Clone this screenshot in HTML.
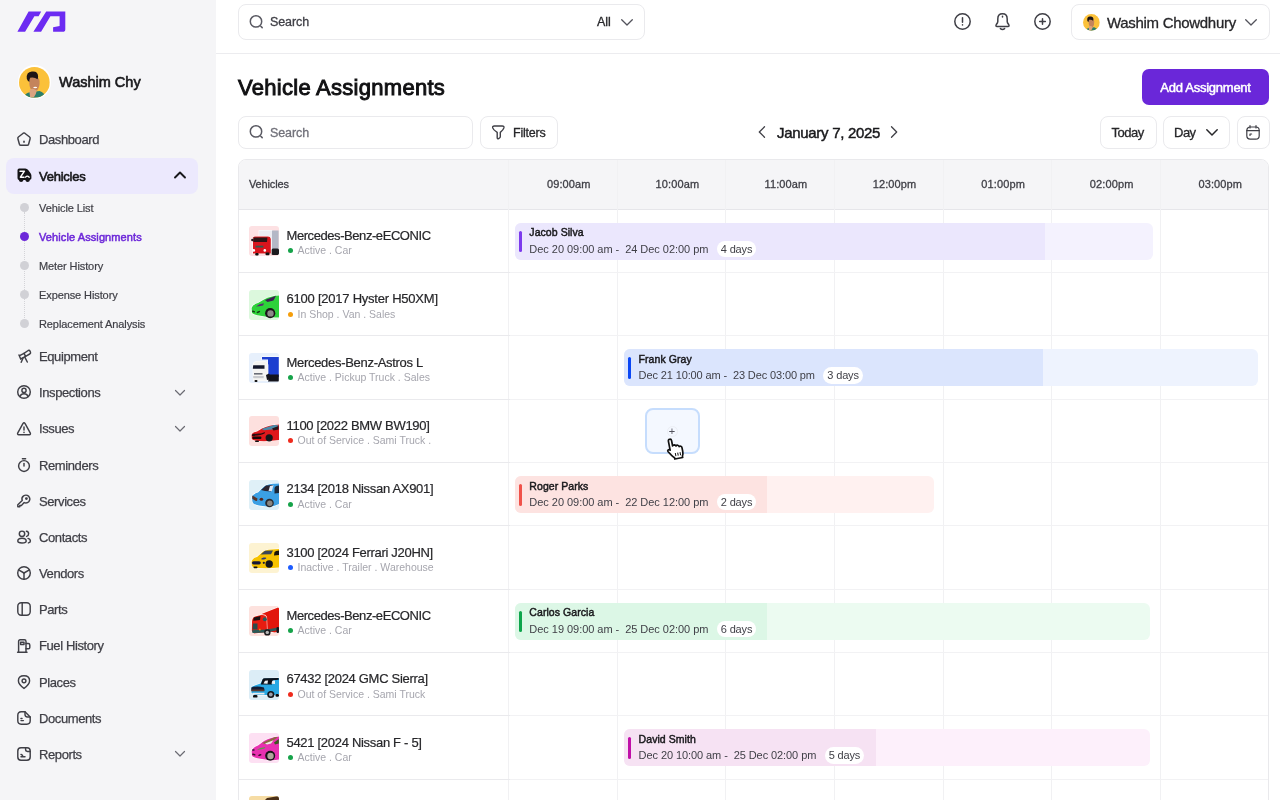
<!DOCTYPE html>
<html lang="en">
<head>
<meta charset="utf-8">
<title>Vehicle Assignments</title>
<style>
*{box-sizing:border-box;margin:0;padding:0}
html,body{width:1280px;height:800px;overflow:hidden;background:#fff}
html{will-change:transform}
body{font-family:"Liberation Sans",sans-serif;color:#1f1f23;position:relative;-webkit-font-smoothing:antialiased}
.abs{position:absolute}
svg{display:block;overflow:visible}
/* sidebar */
#side{position:absolute;left:0;top:0;width:216px;height:800px;background:#f5f5f7}
.nav{-webkit-text-stroke:0.25px #3f3f46;position:absolute;left:6px;width:192px;height:36px;border-radius:8px;font-size:13px;color:#3f3f46;line-height:36px;padding-left:33px;letter-spacing:-0.4px}
.nav svg.ic{position:absolute;left:11px;top:10.3px;width:14px;height:14px;stroke:#3f3f46;fill:none;stroke-width:1.45;stroke-linecap:round;stroke-linejoin:round}
.nav svg.ch{position:absolute;left:169px;top:14.6px;width:10px;height:6px;stroke:#6b6b73;fill:none;stroke-width:1.2;stroke-linecap:round;stroke-linejoin:round}
.nav.act{background:#ece9fd;color:#18181b;-webkit-text-stroke:0.6px #18181b;letter-spacing:-0.25px}
.sub{-webkit-text-stroke:0.2px #3f3f46;position:absolute;left:39px;font-size:11px;color:#3f3f46;line-height:14px;letter-spacing:-0.1px}
.sub.on{color:#6d28d9;-webkit-text-stroke:0.5px #6d28d9;letter-spacing:0.1px}
.dot{position:absolute;left:20px;width:9px;height:9px;border-radius:50%;background:#d1d1d6}
.dot.on{background:#6d28d9}
/* top */
#top{position:absolute;left:216px;top:0;width:1064px;height:54px;border-bottom:1px solid #ececef;background:#fff}
.box{position:absolute;border:1.3px solid #eaeaed;border-radius:8px;background:#fff}
.t13{font-size:13px;color:#3f3f46;-webkit-text-stroke:0.3px currentColor}
/* table */
#tbl{position:absolute;left:237.5px;top:159px;width:1031.5px;height:660px;border:1px solid #e9e9ec;border-radius:8px 8px 0 0;overflow:hidden;background:#fff}
#thead{position:absolute;left:0;top:0;width:1031px;height:49.5px;background:#f5f5f7;border-bottom:1px solid #e6e6ea}
.th{position:absolute;top:0;height:49px;line-height:48.5px;font-size:11px;color:#3f3f46;text-align:center;letter-spacing:0.12px;-webkit-text-stroke:0.3px #3f3f46}
.vl{position:absolute;top:0;width:1px;height:660px;background:#f1f1f3}
.hl{position:absolute;left:0;width:1031px;height:1px;background:linear-gradient(90deg,#eaeaed 0,#eaeaed 271px,#f2f2f4 271px)}
.veh{position:absolute;left:0;width:270px;height:63px}
.veh .thumb{position:absolute;left:10.5px;top:17.2px;width:30px;height:30px;border-radius:3px;overflow:hidden}
.veh .nm{-webkit-text-stroke:0.2px #27272a;position:absolute;left:48px;top:18.7px;font-size:13px;line-height:16px;color:#27272a;white-space:nowrap;letter-spacing:-0.3px}
.veh .st{position:absolute;left:59px;top:35px;font-size:10.5px;line-height:12px;color:#a6a6ae;white-space:nowrap}
.veh .sd{position:absolute;left:49px;top:39px;width:5px;height:5px;border-radius:50%}
.thumb .b{stroke:#fff;stroke-width:1.1;paint-order:stroke;stroke-linejoin:round}
.bar{position:absolute;height:37.2px;border-radius:6px;overflow:hidden}
.bar .dk{position:absolute;left:0;top:0;height:38px}
.bar .ac{position:absolute;left:3.75px;top:8px;width:3.4px;height:21.6px;border-radius:2px}
.bar .bn{position:absolute;left:14.6px;top:3.6px;font-size:10.5px;-webkit-text-stroke:0.45px #18181b;line-height:13px;color:#18181b;white-space:nowrap;letter-spacing:0.06px}
.bar .bd{position:absolute;left:14.6px;top:20px;font-size:11px;line-height:13px;color:#3f3f46;white-space:nowrap;letter-spacing:-0.04px}
.bar .pill{display:inline-block;vertical-align:top;margin:-2px 0 0 8.5px;height:16.5px;line-height:16.5px;border-radius:9px;background:#fff;font-size:11px;color:#3f3f46;padding:0 3.9px;white-space:nowrap;letter-spacing:-0.15px}
</style>
</head>
<body>
<div id="side">
  <svg class="abs" style="left:0;top:0" width="80" height="40" viewBox="0 0 80 40"><path fill="#6c2bf2" d="M28.6 11.4H41.2L38.6 16.2H34.4L25.1 31.8H17.4Z"/><path fill="#6c2bf2" d="M46.2 11.4H65.3V29.2Q65.3 31.8 62.6 31.8H53.1V27.2L59.6 25.9V16.2H50.4L41.1 31.8H33.4Z"/></svg>
  <div class="abs" style="left:17.600px;top:65.300px;width:33.600px;height:33.600px;border-radius:50%;background:#fff"></div>
  <svg class="abs" style="left:19px;top:66.700px" width="30.800" height="30.800" viewBox="0 0 30 30"><defs><clipPath id="av"><circle cx="15" cy="15" r="15"/></clipPath></defs><g clip-path="url(#av)"><rect width="30" height="30" fill="#fbc13a"/><path d="M4 30Q6 25 11 24.500L20 23.500Q25 25 26 30Z" fill="#2b7f6c"/><path d="M10 12Q9.600 19 12 22.500Q14.500 25 17.500 23Q20.500 19.500 20 13.500Q19.500 9.500 15 9.500Q10.500 9.500 10 12Z" fill="#c4845c"/><path d="M7.600 11.500Q6.800 5 12.500 4.500Q18.500 3.800 18.600 9Q18.700 11 18 12Q15 9.400 11 10.400Q10 12 10 14.500Q8 13.600 7.600 11.500Z" fill="#1d1516"/><ellipse cx="15.800" cy="20" rx="1.900" ry="0.800" fill="#fff"/><path d="M10.400 22.500Q12 20.800 14.500 21.500L17.300 23Q17 26 14.500 29.500L10.800 29.500Q10 25.500 10.400 22.500Z" fill="#dba380"/></g></svg>
  <div class="abs" style="left:59px;top:73px;font-size:14.500px;-webkit-text-stroke:0.600px #18181b;line-height:18px;color:#18181b;letter-spacing:0px" id="wname">Washim Chy</div>

  <div class="nav" style="top:121.8px"><svg class="ic" viewBox="0 0 14 14"><path d="M6.200 1.200Q7 0.600 7.800 1.200L12.600 5Q13.400 5.700 13.100 6.700L11.600 12.200Q11.300 13.200 10.200 13.200H3.800Q2.700 13.200 2.400 12.200L0.900 6.700Q0.600 5.700 1.400 5Z"/><path d="M7 9.200V10.200"/></svg>Dashboard</div>
  <div class="nav act" style="top:157.5px;line-height:37.6px"><svg class="abs" style="left:11px;top:10.500px" width="15" height="15" viewBox="0 0 15 15"><path d="M2.200 0.600H8.200Q10.200 0.600 11.400 2.200L13.600 5.200Q14.400 6.300 14.400 7.600V10.200Q14.400 11.600 13 11.800Q12.600 14 10.600 14Q8.800 14 8.300 12H6.500Q6 14 4.100 14Q2.200 14 1.800 11.900Q0.500 11.600 0.500 10V2.300Q0.500 0.600 2.200 0.600Z" fill="#141416"/><path d="M3 3.200H7.400L3.400 9.200H7" fill="none" stroke="#fff" stroke-width="1.500" stroke-linejoin="round" stroke-linecap="round"/><path d="M8.600 9.200Q10.200 7 12.200 9.200" fill="none" stroke="#fff" stroke-width="1.300" stroke-linecap="round"/></svg>Vehicles<svg class="abs" style="left:168px;top:13.500px" width="12" height="8" viewBox="0 0 12 8"><path d="M1 6.500L6 1.500L11 6.500" fill="none" stroke="#18181b" stroke-width="1.900" stroke-linecap="round" stroke-linejoin="round"/></svg></div>

  <div class="abs" style="left:24px;top:212px;width:0;height:108px;border-left:1px dotted #d4d4d8"></div>
  <div class="dot" style="top:203px"></div><div class="sub" style="top:201px">Vehicle List</div>
  <div class="dot on" style="top:232px"></div><div class="sub on" style="top:230px">Vehicle Assignments</div>
  <div class="dot" style="top:261px"></div><div class="sub" style="top:259px">Meter History</div>
  <div class="dot" style="top:290px"></div><div class="sub" style="top:288px">Expense History</div>
  <div class="dot" style="top:319px"></div><div class="sub" style="top:317px">Replacement Analysis</div>

  <div class="nav" style="top:339px"><svg class="ic" viewBox="0 0 14 14"><path d="M7 4.300L11.200 1.500Q12.400 0.900 13 2.100L13.500 3.200Q13.900 4.400 12.700 5L8.600 7.300Z"/><path d="M7 4.300L2.600 6.700"/><path d="M8.600 7.300L4.200 9.600"/><path d="M2 6L3.800 10.200"/><path d="M6.200 8.800L4.200 13.300"/><path d="M7.800 8.200L10.300 13"/></svg>Equipment</div>
  <div class="nav" style="top:375.2px"><svg class="ic" viewBox="0 0 14 14"><circle cx="7" cy="7" r="6.300"/><circle cx="7" cy="5.400" r="2.100"/><path d="M3 11.600Q4 8.800 7 8.800Q10 8.800 11 11.600"/></svg>Inspections<svg class="ch" viewBox="0 0 10 6"><path d="M0.500 0.500L5 5L9.500 0.500"/></svg></div>
  <div class="nav" style="top:411.4px"><svg class="ic" viewBox="0 0 14 14"><path d="M5.900 1.600Q7 0 8.100 1.600L13.200 10.800Q14 12.600 12.200 12.800H1.800Q0 12.600 0.800 10.800Z"/><path d="M7 5V8"/><path d="M7 10.200V10.400"/></svg>Issues<svg class="ch" viewBox="0 0 10 6"><path d="M0.500 0.500L5 5L9.500 0.500"/></svg></div>
  <div class="nav" style="top:447.5px"><svg class="ic" viewBox="0 0 14 14"><circle cx="7" cy="8" r="5.400"/><path d="M5.400 0.800H8.600"/><path d="M7 5.400V8"/></svg>Reminders</div>
  <div class="nav" style="top:483.7px"><svg class="ic" viewBox="0 0 14 14"><path d="M5.200 6.600Q4.200 3.400 6.600 1.800Q9.400 0.200 11.800 2.400Q13.800 4.800 12 7.400Q10 9.600 7.200 8.600L4.400 11.400H2.800V12.800H0.800V10.800Z"/><circle cx="9.400" cy="4.600" r="0.700"/></svg>Services</div>
  <div class="nav" style="top:519.9px"><svg class="ic" viewBox="0 0 14 14"><circle cx="5" cy="3.800" r="2.700"/><path d="M0.800 11Q0.800 8.200 5 8.200Q9.200 8.200 9.200 11Q9.200 13 5 13Q0.800 13 0.800 11Z"/><path d="M9.400 1.200Q11.600 1.400 11.600 3.800Q11.600 6 9.600 6.400"/><path d="M11 8.400Q13.400 9 13.400 11Q13.400 12.600 11.400 12.900"/></svg>Contacts</div>
  <div class="nav" style="top:556.1px"><svg class="ic" viewBox="0 0 14 14"><circle cx="7" cy="7" r="6.300"/><path d="M7 7V13.200"/><path d="M7 7L1.600 3.900"/><path d="M7 7L12.400 3.900"/></svg>Vendors</div>
  <div class="nav" style="top:592.2px"><svg class="ic" viewBox="0 0 14 14"><rect x="0.800" y="0.800" width="12.400" height="12.400" rx="3.400"/><path d="M5.200 0.800V13.200"/></svg>Parts</div>
  <div class="nav" style="top:628.4px"><svg class="ic" viewBox="0 0 14 14"><path d="M1.600 13V2.400Q1.600 0.800 3.200 0.800H7.400Q9 0.800 9 2.400V13"/><path d="M0.600 13.200H10"/><path d="M3.600 3.200H7V5.400H3.600Z"/><path d="M9 4.400H11.200Q12.800 4.400 12.800 6V8.400Q12.800 9.800 11.400 9.800H9"/></svg>Fuel History</div>
  <div class="nav" style="top:664.6px"><svg class="ic" viewBox="0 0 14 14"><path d="M7 13.400Q1.400 9.400 1.400 5.800Q1.400 0.700 7 0.700Q12.600 0.700 12.600 5.800Q12.600 9.400 7 13.400Z"/><circle cx="7" cy="5.800" r="1.900"/></svg>Places</div>
  <div class="nav" style="top:700.8px"><svg class="ic" viewBox="0 0 14 14"><path d="M4.200 0.800H8L13.200 6V9.800Q13.200 13.200 9.800 13.200H4.200Q0.800 13.200 0.800 9.800V4.200Q0.800 0.800 4.200 0.800Z"/><path d="M8 0.800V3.600Q8 6 10.400 6H13.200"/><path d="M4 9.600H6.400"/><path d="M4 7.400H5"/></svg>Documents</div>
  <div class="nav" style="top:736.9px"><svg class="ic" viewBox="0 0 14 14"><rect x="0.800" y="0.800" width="12.400" height="12.400" rx="3.200"/><path d="M8.600 0.800V2.600Q8.600 4.400 10.400 4.400H13.200"/><path d="M4 9.800H8"/><path d="M4 7.400L5.600 8.400"/></svg>Reports<svg class="ch" viewBox="0 0 10 6"><path d="M0.500 0.500L5 5L9.500 0.500"/></svg></div>
</div>
<div id="top">
  <div class="box" style="left:22px;top:4px;width:407px;height:36px"></div>
  <svg class="abs" style="left:33px;top:14px" width="16" height="16" viewBox="0 0 16 16" fill="none" stroke="#5a5a63" stroke-width="1.500" stroke-linecap="round"><circle cx="7" cy="7.400" r="5.700"/><path d="M11.800 12.200L13.200 13.600"/></svg>
  <div class="abs t13" style="left:54px;top:14px;line-height:16px;font-size:12.500px;letter-spacing:-0.100px">Search</div>
  <div class="abs t13" style="left:381px;top:14px;line-height:16px;font-size:12.500px;color:#27272a">All</div>
  <svg class="abs" style="left:405px;top:18.500px" width="12" height="7" viewBox="0 0 12 7" fill="none" stroke="#52525b" stroke-width="1.300" stroke-linecap="round" stroke-linejoin="round"><path d="M0.700 0.700L6 6L11.300 0.700"/></svg>

  <svg class="abs" style="left:737.500px;top:13.300px" width="17" height="17" viewBox="0 0 17 17" fill="none" stroke="#3f3f46" stroke-width="1.500" stroke-linecap="round"><circle cx="8.500" cy="8.500" r="7.700"/><path d="M8.500 4.800V9.200"/><path d="M8.500 11.800V12"/></svg>
  <svg class="abs" style="left:778px;top:12.500px" width="17" height="18" viewBox="0 0 17 18" fill="none" stroke="#3f3f46" stroke-width="1.500" stroke-linecap="round" stroke-linejoin="round"><path d="M8.500 0.800Q13.200 0.800 13.200 6V8.600Q13.200 10 14.600 11.400Q15.800 13.400 13.800 13.600H3.200Q1.200 13.400 2.400 11.400Q3.800 10 3.800 8.600V6Q3.800 0.800 8.500 0.800Z"/><path d="M6.400 15.600Q8.500 17.400 10.600 15.600"/><path d="M8.500 3.200V4"/></svg>
  <svg class="abs" style="left:817.500px;top:13.300px" width="17" height="17" viewBox="0 0 17 17" fill="none" stroke="#3f3f46" stroke-width="1.500" stroke-linecap="round"><circle cx="8.500" cy="8.500" r="7.700"/><path d="M8.500 5.700V11.300"/><path d="M5.700 8.500H11.300"/></svg>

  <div class="box" style="left:855px;top:4px;width:199px;height:36px"></div>
  <svg class="abs" style="left:866.700px;top:13.500px" width="16.800" height="16.800" viewBox="0 0 30 30"><defs><clipPath id="av2"><circle cx="15" cy="15" r="15"/></clipPath></defs><g clip-path="url(#av2)"><rect width="30" height="30" fill="#fbc13a"/><path d="M4 30Q6 25 11 24.500L20 23.500Q25 25 26 30Z" fill="#2b7f6c"/><path d="M10 12Q9.600 19 12 22.500Q14.500 25 17.500 23Q20.500 19.500 20 13.500Q19.500 9.500 15 9.500Q10.500 9.500 10 12Z" fill="#c4845c"/><path d="M7.600 11.500Q6.800 5 12.500 4.500Q18.500 3.800 18.600 9Q18.700 11 18 12Q15 9.400 11 10.400Q10 12 10 14.500Q8 13.600 7.600 11.500Z" fill="#1d1516"/><path d="M10.400 22.500Q12 20.800 14.500 21.500L17.300 23Q17 26 14.500 29.500L10.800 29.500Q10 25.500 10.400 22.500Z" fill="#dba380"/></g></svg>
  <div class="abs" style="left:891px;top:13.700px;font-size:15px;line-height:18px;color:#27272a;letter-spacing:-0.300px;-webkit-text-stroke:0.300px #27272a;white-space:nowrap" id="uname">Washim Chowdhury</div>
  <svg class="abs" style="left:1029px;top:18.500px" width="12" height="7" viewBox="0 0 12 7" fill="none" stroke="#52525b" stroke-width="1.300" stroke-linecap="round" stroke-linejoin="round"><path d="M0.700 0.700L6 6L11.300 0.700"/></svg>
</div>
<div class="abs" id="title" style="left:238px;top:75.3px;font-size:22px;font-weight:normal;-webkit-text-stroke:0.95px #111113;line-height:26px;color:#111113;letter-spacing:0.28px;white-space:nowrap">Vehicle Assignments</div>
<div class="abs" style="left:1142px;top:68.500px;width:127px;height:36px;border-radius:7px;background:#6a27d9;color:#fff;font-size:13px;-webkit-text-stroke:0.500px #fff;line-height:37.200px;text-align:center;letter-spacing:-0.25px" id="addbtn">Add Assignment</div>

<div class="box" style="left:238px;top:115.500px;width:235px;height:33px"></div>
<svg class="abs" style="left:249px;top:124px" width="16" height="16" viewBox="0 0 16 16" fill="none" stroke="#5a5a63" stroke-width="1.500" stroke-linecap="round"><circle cx="7" cy="7.400" r="5.700"/><path d="M11.800 12.200L13.200 13.600"/></svg>
<div class="abs t13" style="left:270px;top:124.500px;line-height:16px;font-size:12.500px;color:#71717a;letter-spacing:-0.100px">Search</div>
<div class="box" style="left:480px;top:115.500px;width:78px;height:33px"></div>
<svg class="abs" style="left:492px;top:124.600px" width="13" height="15" viewBox="0 0 13 15" fill="none" stroke="#3f3f46" stroke-width="1.400" stroke-linejoin="round" stroke-linecap="round"><path d="M2.300 1H10.300Q12.300 1 11.900 2.900Q11.300 5 8.300 7.400V11.600Q8.300 12.500 7.500 13L6.600 13.600Q5.300 14.200 5.200 12.800V7.400Q1.300 5 0.700 2.900Q0.300 1 2.300 1Z"/></svg>
<div class="abs t13" style="left:513px;top:124.500px;line-height:16px;font-size:12.500px;color:#27272a;letter-spacing:-0.200px">Filters</div>

<svg class="abs" style="left:758px;top:126px" width="8" height="12" viewBox="0 0 8 12" fill="none" stroke="#3f3f46" stroke-width="1.300" stroke-linecap="round" stroke-linejoin="round"><path d="M6.500 0.800L1.300 6L6.500 11.200"/></svg>
<div class="abs" id="date" style="left:777px;top:123.800px;font-size:15px;line-height:18px;color:#18181b;letter-spacing:-0.300px;white-space:nowrap;-webkit-text-stroke:0.450px #18181b">January 7, 2025</div>
<svg class="abs" style="left:890px;top:126px" width="8" height="12" viewBox="0 0 8 12" fill="none" stroke="#3f3f46" stroke-width="1.300" stroke-linecap="round" stroke-linejoin="round"><path d="M1.500 0.800L6.700 6L1.500 11.200"/></svg>

<div class="box" style="left:1100px;top:115.500px;width:56.500px;height:33px"></div>
<div class="abs t13" id="today" style="left:1111.500px;top:124.500px;line-height:16px;font-size:13px;color:#27272a;letter-spacing:-0.500px">Today</div>
<div class="box" style="left:1163px;top:115.500px;width:66.500px;height:33px"></div>
<div class="abs t13" style="left:1174px;top:124.500px;line-height:16px;font-size:13px;color:#27272a;letter-spacing:-0.500px">Day</div>
<svg class="abs" style="left:1205.500px;top:129px" width="12" height="7" viewBox="0 0 12 7" fill="none" stroke="#27272a" stroke-width="1.500" stroke-linecap="round" stroke-linejoin="round"><path d="M0.800 0.800L6 6L11.200 0.800"/></svg>
<div class="box" style="left:1236.500px;top:115.500px;width:33px;height:33px"></div>
<svg class="abs" style="left:1246px;top:125px" width="14" height="15" viewBox="0 0 14 15" fill="none" stroke="#3f3f46" stroke-width="1.200" stroke-linecap="round" stroke-linejoin="round"><rect x="0.800" y="2" width="12.400" height="12.200" rx="3.400"/><path d="M0.800 5.600H13.200"/><path d="M4 0.700V3"/><path d="M10 0.700V3"/><path d="M4 10.400V9H5.600"/></svg>

<div id="tbl">
<div id="thead">
<div class="th" style="left:10.5px;text-align:left;letter-spacing:-0.15px">Vehicles</div>
<div class="th" style="left:290.3px;width:80px">09:00am</div>
<div class="th" style="left:398.88px;width:80px">10:00am</div>
<div class="th" style="left:507.46px;width:80px">11:00am</div>
<div class="th" style="left:616.04px;width:80px">12:00pm</div>
<div class="th" style="left:724.62px;width:80px">01:00pm</div>
<div class="th" style="left:833.2px;width:80px">02:00pm</div>
<div class="th" style="left:941.78px;width:80px">03:00pm</div>
</div>
<div class="vl" style="left:269.8px"></div>
<div class="vl" style="left:378.38px"></div>
<div class="vl" style="left:486.96px"></div>
<div class="vl" style="left:595.54px"></div>
<div class="vl" style="left:704.12px"></div>
<div class="vl" style="left:812.7px"></div>
<div class="vl" style="left:921.28px"></div>
<div class="hl" style="top:112.03px"></div>
<div class="hl" style="top:175.36px"></div>
<div class="hl" style="top:238.69px"></div>
<div class="hl" style="top:302.02px"></div>
<div class="hl" style="top:365.35px"></div>
<div class="hl" style="top:428.68px"></div>
<div class="hl" style="top:492.01px"></div>
<div class="hl" style="top:555.34px"></div>
<div class="hl" style="top:618.67px"></div>
<div class="hl" style="top:682px"></div>
<div class="veh" style="top:49.2px"><svg class="thumb" viewBox="0 0 30 30"><rect width="30" height="30" fill="#fde1e3"/><rect x="10.2" y="4.5" width="13" height="19" fill="#ececf2" class="b"/><rect x="23" y="4.5" width="6.6" height="19" fill="#b4b8c6"/><rect x="22.5" y="22.5" width="7.5" height="6.5" rx="1.5" fill="#1c1c20"/><path d="M4.4 11.2Q4.600 10.600 6 10.600H19Q21.500 10.600 21.800 13V27.500H4V16Z" fill="#d8141c" class="b"/><path d="M4.600 11.400H18.400L18 16H4.400Z" fill="#2a1416"/><rect x="6.500" y="19.700" width="7.800" height="1.800" fill="#2c5a50"/><circle cx="4.800" cy="24.400" r="1.300" fill="#fff"/><circle cx="15.800" cy="24.400" r="1.300" fill="#fff"/><rect x="6.200" y="27" width="3.400" height="2.400" rx="1" fill="#111"/><rect x="16.500" y="26.500" width="4" height="2.800" rx="1" fill="#111"/><circle cx="3.400" cy="14" r="1.300" fill="#1c1c20"/></svg><div class="nm" style="letter-spacing:-0.43px">Mercedes-Benz-eECONIC</div><div class="sd" style="background:#16a34a"></div><div class="st">Active . Car</div></div>
<div class="veh" style="top:112.53px"><svg class="thumb" viewBox="0 0 30 30"><rect width="30" height="30" fill="#dcf8dd"/><path d="M2.600 18Q3.500 14.500 9 13L15 9.500Q22 5.800 30 5.500V27.500Q22 28 13 26Q5 25 3 23Z" fill="#2ed23a" class="b"/><path d="M16 10L27 5.800L24.500 10.500L18.500 12Z" fill="#3a2050"/><path d="M7 16.500Q10 13.500 15 13.200L14 15.500Q10 16.500 7 16.500Z" fill="#5a2a70"/><ellipse cx="4.500" cy="21.500" rx="1.600" ry="0.900" fill="#143a18" transform="rotate(15 4.5 21.5)"/><ellipse cx="9.400" cy="22" rx="1.900" ry="0.900" fill="#143a18" transform="rotate(-20 9.4 22)"/><circle cx="21.200" cy="23.200" r="5.100" fill="#1a1418"/><circle cx="21.500" cy="23.400" r="3.200" fill="#8c8a88"/></svg><div class="nm" style="letter-spacing:-0.23px">6100 [2017 Hyster H50XM]</div><div class="sd" style="background:#f59e0b"></div><div class="st">In Shop . Van . Sales</div></div>
<div class="veh" style="top:175.86px"><svg class="thumb" viewBox="0 0 30 30"><rect width="30" height="30" fill="#e7f0fc"/><path d="M13 4H29.800V24H19V6.500H13Z" fill="#1c3fd0" class="b"/><rect x="19" y="21.500" width="10.800" height="7" fill="#14141c"/><path d="M4 13Q4.200 9 8 8.600H15Q18.500 9 18.800 12V27.500H4.500Z" fill="#f4f4f2" class="b"/><path d="M4.200 12.200H15.500V15.800H3.800Z" fill="#14182c"/><rect x="5" y="20" width="8.500" height="1.600" fill="#6a6e78"/><rect x="4.200" y="23" width="10.500" height="2.200" fill="#c8cace"/><rect x="5.500" y="27" width="3" height="2" rx="1" fill="#111"/><path d="M17 22L20 20.500L22 26L18 27Z" fill="#14141c"/></svg><div class="nm">Mercedes-Benz-Astros L</div><div class="sd" style="background:#16a34a"></div><div class="st">Active . Pickup Truck . Sales</div></div>
<div class="veh" style="top:239.19px"><svg class="thumb" viewBox="0 0 30 30"><rect width="30" height="30" fill="#fde0de"/><path d="M2.500 19Q3 16.500 8 15.500L13 12.500Q20 9 30 8.500V24Q20 25.500 10 25Q4 24.500 2.800 23Z" fill="#e0181c" class="b"/><path d="M12.500 13L25 9L29.500 9.200L28 13L15 14.200Z" fill="#4a8aa8"/><path d="M23 12.500L29.500 10V13.500L24.500 14.500Z" fill="#281418"/><path d="M3 18.500Q8 17 12 17.500L16 16L15.500 17.500Q12 19.500 3 20Z" fill="#2a0c10"/><rect x="3.400" y="20.500" width="9" height="2.600" rx="1" fill="#1a0808"/><circle cx="20.200" cy="21.800" r="3.600" fill="#16161a"/><rect x="6" y="24.400" width="4" height="1.600" rx="0.800" fill="#111"/></svg><div class="nm">1100 [2022 BMW BW190]</div><div class="sd" style="background:#ef2b1d"></div><div class="st">Out of Service . Sami Truck .</div></div>
<div class="veh" style="top:302.52px"><svg class="thumb" viewBox="0 0 30 30"><rect width="30" height="30" fill="#dff0f7"/><path d="M3 17Q3.500 14 9 12.500L14 7.500Q17 4.200 24 3.800L30 3.500V24Q24 27 18 26.500Q8 26 4.500 23.500Q3 22 3 17Z" fill="#3ba0e4" class="b"/><path d="M12 10L17 5.500L24 5L22 11.500L16 11Z" fill="#2a2430"/><path d="M21 6L24.500 5.200L22.800 11.200L19.500 11Z" fill="#dce8f4"/><path d="M25.500 8Q26 5.800 30 5.500V13L25.500 13.500Z" fill="#1c2838"/><path d="M3.200 15.500Q6 17 8.500 18.500L8 21Q5 20.500 3.400 18.500Z" fill="#5a3428"/><ellipse cx="12.400" cy="19.200" rx="1.800" ry="1.500" fill="#5a2418"/><circle cx="20.500" cy="23" r="4.300" fill="#2a2a2e"/><circle cx="20.800" cy="23.200" r="2.700" fill="#8a8680"/></svg><div class="nm">2134 [2018 Nissan AX901]</div><div class="sd" style="background:#16a34a"></div><div class="st">Active . Car</div></div>
<div class="veh" style="top:365.85px"><svg class="thumb" viewBox="0 0 30 30"><rect width="30" height="30" fill="#fdf3d2"/><path d="M2.500 19Q3 15.500 8 14L13 9.500Q16 6.800 22 6.500L30 6V24.500Q20 25.500 10 25Q4 24.500 2.800 23Z" fill="#f6c200" class="b"/><path d="M11.500 11.500L16 7.800L24 7.500L22 11.200Z" fill="#3a4658"/><path d="M25.500 9Q26.500 7.500 30 7.500V12L25 12.500Z" fill="#1a1408"/><ellipse cx="14.800" cy="15.500" rx="2.600" ry="0.900" fill="#2a3a78" transform="rotate(-12 14.800 15.500)"/><rect x="3" y="18.200" width="8.800" height="3.200" rx="1.600" fill="#15183c"/><circle cx="14.800" cy="19.800" r="1.100" fill="#15183c"/><circle cx="20.200" cy="21" r="3.700" fill="#14141a"/><rect x="4.500" y="23.600" width="4" height="1.600" rx="0.800" fill="#111"/></svg><div class="nm">3100 [2024 Ferrari J20HN]</div><div class="sd" style="background:#1d5cff"></div><div class="st">Inactive . Trailer . Warehouse</div></div>
<div class="veh" style="top:429.18px"><svg class="thumb" viewBox="0 0 30 30"><rect width="30" height="30" fill="#fde2de"/><path d="M12.500 8L29 1.500L30 2V25L26 26.500L12.500 24Z" fill="#e2160c" class="b"/><path d="M3 16Q3 11.500 6 10.500L12 9Q16 8.500 17.500 11L18 26L5 27.500L2.800 25Z" fill="#e81c10" class="b"/><path d="M4.800 11.500L11.500 10L11 14L4.200 14.800Z" fill="#181010"/><circle cx="15.800" cy="13.200" r="2" fill="#285a5c"/><path d="M4 17.500H8.500V23.500H3.500Z" fill="#2c4a48"/><path d="M3 24.200L18 23.500L29 21.500V24L18 26.500L3.500 27Z" fill="#2c5a58"/><rect x="10" y="22.800" width="1.600" height="1.600" fill="#ff8a00"/><circle cx="18.300" cy="26.400" r="3.200" fill="#1a1a1e"/><circle cx="18.300" cy="26.400" r="1.700" fill="#b8b8b8"/><rect x="27.500" y="21" width="2.500" height="6" rx="1" fill="#15151a"/></svg><div class="nm" style="letter-spacing:-0.43px">Mercedes-Benz-eECONIC</div><div class="sd" style="background:#16a34a"></div><div class="st">Active . Car</div></div>
<div class="veh" style="top:492.51px"><svg class="thumb" viewBox="0 0 30 30"><rect width="30" height="30" fill="#dcedf6"/><path d="M11.500 13.500L13.500 9.500Q14 8.500 15.500 8.500L30 8V24L26 25H6L2.500 23V18Q2.500 16.500 4 16.200Z" fill="#28a8e4" class="b"/><path d="M13.500 9.500Q14 8.300 15.500 8.300L29.500 8L29.800 9.800L24 10.200L23 14.500H11.800Z" fill="#0c1018"/><path d="M14.500 13.500L16 10.800L19 10.500L18.500 13.800Z" fill="#eef2f6"/><path d="M22.500 13.800L23.300 10.800L26 10.600V14Z" fill="#eef2f6"/><path d="M2.300 17.500Q8 15.500 15 17.500L15.500 20.500H2.300Z" fill="#141c34"/><rect x="2.300" y="19.500" width="13" height="1.800" fill="#5a3a30"/><rect x="3.500" y="22.800" width="12" height="1.700" fill="#e8eaee"/><rect x="4" y="25" width="4.500" height="2.600" rx="1.200" fill="#0c0c10"/><circle cx="21.800" cy="24.500" r="3.600" fill="#14141a"/><circle cx="21.800" cy="24.500" r="1.900" fill="#9aa0ac"/><rect x="26.500" y="24" width="3.500" height="2.800" rx="1.200" fill="#0c0c10"/></svg><div class="nm">67432 [2024 GMC Sierra]</div><div class="sd" style="background:#ef2b1d"></div><div class="st">Out of Service . Sami Truck</div></div>
<div class="veh" style="top:555.84px"><svg class="thumb" viewBox="0 0 30 30"><rect width="30" height="30" fill="#fde0f3"/><path d="M2.600 18Q3.500 14.500 9 12.500L15 8Q22 4 30 3.500V26.500Q22 28 13 26Q5 25 3 23Z" fill="#e830b0" class="b"/><path d="M13 10L26 4L29 4.200L24 7.500L16 11Z" fill="#8a6a40"/><path d="M16 10.500L24.500 7.200L22 10.500L18 11.500Z" fill="#e8f0e0"/><path d="M25 9.500L29.800 6V10.500L26 11.500Z" fill="#3a5a20"/><path d="M8 16.500Q11 14.500 16.500 14L15.500 15.500Q11 17 8 16.500Z" fill="#5a9a4a"/><ellipse cx="4.300" cy="17" rx="1.500" ry="0.800" fill="#1a1a2a"/><ellipse cx="4.800" cy="21.500" rx="1.800" ry="0.900" fill="#3a0a2a" transform="rotate(15 4.8 21.5)"/><ellipse cx="10.800" cy="22" rx="1.800" ry="0.900" fill="#3a0a2a" transform="rotate(-20 10.8 22)"/><circle cx="21.200" cy="22.800" r="5" fill="#181418"/><circle cx="21.500" cy="23" r="3.200" fill="#b0a49c"/></svg><div class="nm">5421 [2024 Nissan F - 5]</div><div class="sd" style="background:#16a34a"></div><div class="st">Active . Car</div></div>
<div class="veh" style="top:619.17px"><svg class="thumb" viewBox="0 0 30 30"><rect width="30" height="30" fill="#f6dca4"/><path d="M18 2L30 0V8L14 6Z" fill="#4a3018"/></svg><div class="nm" style="letter-spacing:-0.43px;top:17.9px">Mercedes-Benz-eECONIC</div><div class="sd" style="background:#16a34a"></div><div class="st">Active . Car</div></div>
<div class="bar" style="left:276.25px;top:62.6px;width:637.75px;background:#f4f2fe"><div class="dk" style="width:530.25px;background:#ebe7fd"></div><div class="ac" style="background:#7c3aed"></div><div class="bn">Jacob Silva</div><div class="bd">Dec 20 09:00 am -&nbsp; 24 Dec 02:00 pm<span class="pill" id="pill0">4 days</span></div></div>
<div class="bar" style="left:385.5px;top:189.26px;width:634px;background:#eef3fe"><div class="dk" style="width:419px;background:#dbe5fd"></div><div class="ac" style="background:#0a47f5"></div><div class="bn">Frank Gray</div><div class="bd" style="letter-spacing:-0.12px">Dec 21 10:00 am -&nbsp; 23 Dec 03:00 pm<span class="pill" id="pill2">3 days</span></div></div>
<div class="bar" style="left:276.25px;top:315.92px;width:419.65px;background:#fff1f0"><div class="dk" style="width:252.05px;background:#fde3e1"></div><div class="ac" style="background:#f0524a"></div><div class="bn">Roger Parks</div><div class="bd">Dec 20 09:00 am -&nbsp; 22 Dec 12:00 pm<span class="pill" id="pill4">2 days</span></div></div>
<div class="bar" style="left:276.25px;top:442.58px;width:634.85px;background:#ecfbf1"><div class="dk" style="width:252.05px;background:#dcf7e6"></div><div class="ac" style="background:#0ea54c"></div><div class="bn">Carlos Garcia</div><div class="bd">Dec 19 09:00 am -&nbsp; 25 Dec 02:00 pm<span class="pill" id="pill6">6 days</span></div></div>
<div class="bar" style="left:385.5px;top:569.24px;width:525.6px;background:#fdf0fb"><div class="dk" style="width:252.4px;background:#f6e2f3"></div><div class="ac" style="background:#c010a8"></div><div class="bn">David Smith</div><div class="bd" style="letter-spacing:-0.08px">Dec 20 10:00 am -&nbsp; 25 Dec 02:00 pm<span class="pill" id="pill8">5 days</span></div></div>
<div class="abs" style="left:406px;top:247.7px;width:55.5px;height:46.8px;border:2px solid #c6ddfd;border-radius:8px;background:#f4f8ff"></div>
<div class="abs" style="left:428px;top:265.8px;width:11px;height:11px;border-radius:50%;border:1px solid #eceff5"></div>
<div class="abs" style="left:430.3px;top:265.2px;font-size:11px;line-height:12px;color:#52525b">+</div>
<svg class="abs" style="left:425.1px;top:276.8px" width="22" height="24" viewBox="0 0 22 24"><g transform="rotate(-11 10 12) translate(0.5 0)"><path d="M5.500 3.400Q5.500 1.600 7.100 1.600Q8.700 1.600 8.700 3.400V8.800Q9.400 7.800 10.600 8Q11.800 8.300 12 9.400Q12.800 8.600 13.900 9Q15 9.400 15 10.600Q15.800 10.200 16.700 10.600Q17.600 11.200 17.600 12.400V16Q17.600 18.800 16.400 20.600V22H8.400V20.600Q6.600 19.200 5.400 17L3.200 13.600Q2.600 12.400 3.600 11.800Q4.500 11.400 5.500 12.400Z" fill="#fff" stroke="#111" stroke-width="1.700" stroke-linejoin="round"/><path d="M10 16.200V19.400M12.400 16.200V19.400M14.800 16.200V19.400" stroke="#111" stroke-width="1" fill="none"/></g></svg>
</div>
</body>
</html>
